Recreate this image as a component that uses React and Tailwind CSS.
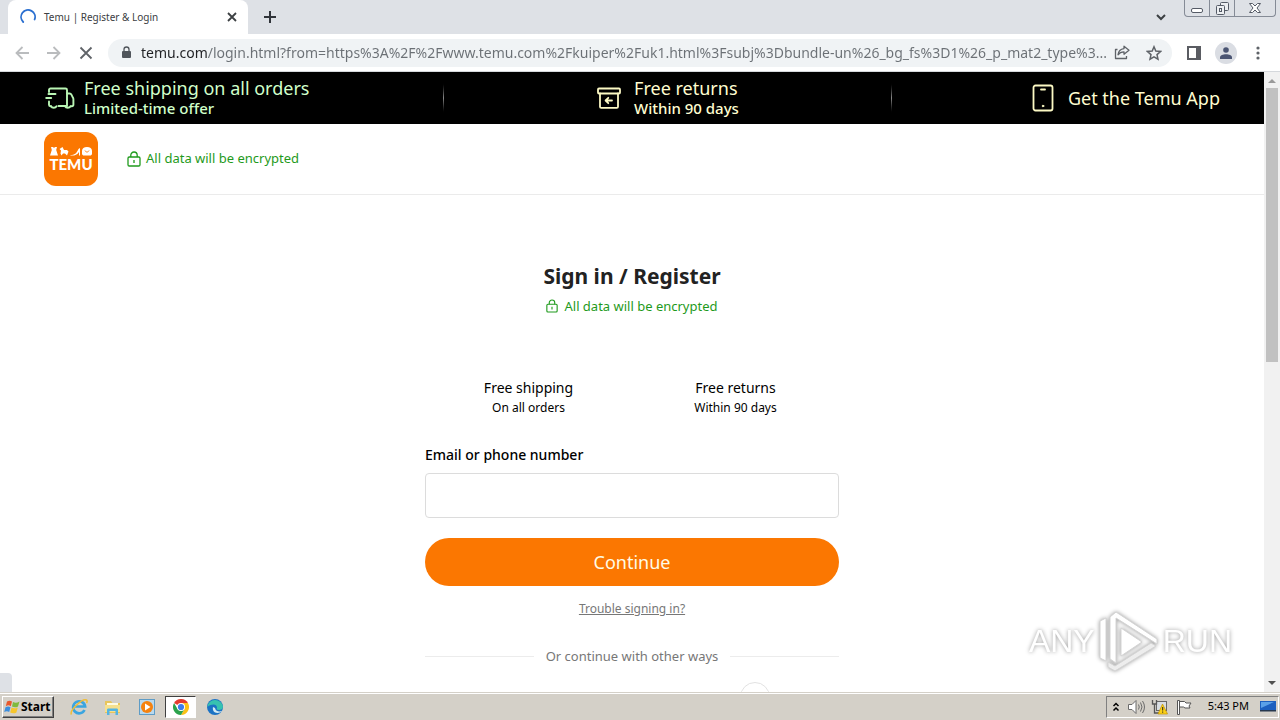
import React from "react";

const LockOutline = ({ className }) => (
  <svg viewBox="0 0 14 16" className={className} fill="none" stroke="currentColor" strokeWidth="1.3" aria-hidden="true">
    <rect x="1" y="6" width="12" height="9" rx="1.2" />
    <path d="M3.8 6V4.2a3.2 3.2 0 0 1 6.4 0V6M7 9v3" />
  </svg>
);

const Truck = () => (
  <svg viewBox="0 0 30 24" className="h-6 w-[30px] shrink-0" fill="none" stroke="#b9f5b4" strokeWidth="1.9" strokeLinecap="round" strokeLinejoin="round" aria-hidden="true">
    <path d="M4 6V4a1.500 1.500 0 0 1 1.500-1.500h15a1.500 1.500 0 0 1 1.500 1.500v16h-8.500M3.500 8h7M1.200 12h5M4 15.500v3.300a1.400 1.400 0 0 0 1.400 1.400H6" />
    <path d="M22 7.500h2.600a2 2 0 0 1 1.800 1.100l1.600 3.200c.3.500.4 1 .4 1.500v5.500a1.400 1.400 0 0 1-1.400 1.400H26" />
    <path d="M6 20.300a3 2.400 0 0 0 5.500 0M20 20.300a3 2.400 0 0 0 5.500 0" />
  </svg>
);

const ReturnBox = () => (
  <svg viewBox="0 0 26 24" className="h-6 w-[26px] shrink-0" fill="none" stroke="#fcf9c4" strokeWidth="1.8" strokeLinecap="round" strokeLinejoin="round" aria-hidden="true">
    <rect x="2" y="2.500" width="22" height="5" rx="1" />
    <path d="M4 7.500v13.200c0 .7.500 1.200 1.200 1.200h15.600c.7 0 1.200-.5 1.200-1.200V7.500M16 14.500h-6M12.300 11.800L9.600 14.500l2.700 2.700" />
  </svg>
);

const Phone = () => (
  <svg viewBox="0 0 22 28" className="h-7 w-[22px] shrink-0" fill="none" stroke="#fcf9c4" strokeWidth="1.8" strokeLinecap="round" aria-hidden="true">
    <rect x="1.500" y="1.500" width="19" height="25" rx="2" />
    <path d="M9 5.500h4" />
    <circle cx="11" cy="22" r="0.800" fill="#fcf9c4" strokeWidth="1" />
  </svg>
);

function TabStrip() {
  return (
    <header className="flex h-[34px] shrink-0 items-start bg-[#dee1e6] pl-2">
      <div className="flex h-[34px] w-60 items-center rounded-t-lg bg-white pl-3 pr-2">
        <svg viewBox="0 0 16 16" className="size-4" fill="none" stroke="#2a6fd0" strokeWidth="1.800" strokeLinecap="round" aria-hidden="true">
          <path d="M3.200 13A7 7 0 1 1 14.600 10.500" />
        </svg>
        <span className="ml-2 flex-1 text-[10px] text-[#3c4043]">Temu | Register &amp; Login</span>
        <button aria-label="Close tab" className="flex size-4 items-center justify-center">
          <svg viewBox="0 0 10 10" className="size-[10px]" stroke="#3c4043" strokeWidth="1.800" aria-hidden="true"><path d="M1 1l8 8M9 1L1 9" /></svg>
        </button>
      </div>
      <button aria-label="New tab" className="ml-3 mt-[7px] flex size-5 items-center justify-center">
        <svg viewBox="0 0 12 12" className="size-3" stroke="#30343a" strokeWidth="2" aria-hidden="true"><path d="M6 0v12M0 6h12" /></svg>
      </button>
      <div className="flex-1" />
      <button aria-label="Search tabs" className="mr-[15px] mt-[9px] flex h-4 w-4 items-center justify-center">
        <svg viewBox="0 0 10 7" className="h-[7px] w-[10px]" fill="none" stroke="#3c4043" strokeWidth="2" aria-hidden="true"><path d="M1 1l4 4 4-4" /></svg>
      </button>
      <div className="mr-1 flex h-[17px] rounded-b border border-t-0 border-[#858b96]">
        <button aria-label="Minimize" className="flex w-[25px] items-end justify-center border-r border-[#858b96] pb-[3px]">
          <svg viewBox="0 0 12 5" className="h-[5px] w-3" fill="#fff" stroke="#555b66" aria-hidden="true"><rect x=".5" y=".5" width="11" height="4" rx="1.500" /></svg>
        </button>
        <button aria-label="Restore" className="flex w-[25px] items-center justify-center border-r border-[#858b96]">
          <svg viewBox="0 0 13 13" className="size-[13px]" fill="#eceef1" stroke="#555b66" aria-hidden="true">
            <rect x="4.500" y=".5" width="8" height="8" rx="1" />
            <rect x=".5" y="3.500" width="8" height="9" rx="1" />
            <rect x="3.500" y="6.500" width="2" height="3" />
          </svg>
        </button>
        <button aria-label="Close window" className="flex w-10 items-center justify-center">
          <svg viewBox="0 0 12 10" className="h-[10px] w-3" fill="#fff" stroke="#555b66" strokeLinejoin="round" aria-hidden="true">
            <path d="M.5.500h3L6 3 8.500.500h3L8 5l3.500 4.500h-3L6 7 3.500 9.500h-3L4 5z" />
          </svg>
        </button>
      </div>
    </header>
  );
}

const address =
  "temu.com/login.html?from=https%3A%2F%2Fwww.temu.com%2Fkuiper%2Fuk1.html%3Fsubj%3Dbundle-un%26_bg_fs%3D1%26_p_mat2_type%3...";

function Toolbar() {
  return (
    <div className="flex h-[38px] shrink-0 items-center border-b border-[#d5d8dc] bg-white pl-3 pr-4">
      <button aria-label="Back" className="flex size-5 items-center justify-center">
        <svg viewBox="0 0 14 14" className="size-[14px]" fill="none" stroke="#babcbe" strokeWidth="1.800" aria-hidden="true"><path d="M14 7H1.500M7.500 1L1.500 7l6 6" /></svg>
      </button>
      <button aria-label="Forward" className="ml-3 flex size-5 items-center justify-center">
        <svg viewBox="0 0 14 14" className="size-[14px]" fill="none" stroke="#babcbe" strokeWidth="1.800" aria-hidden="true"><path d="M0 7h12.500M6.500 1l6 6-6 6" /></svg>
      </button>
      <button aria-label="Stop loading" className="ml-3 flex size-5 items-center justify-center">
        <svg viewBox="0 0 14 14" className="size-[14px]" stroke="#5f6368" strokeWidth="1.800" aria-hidden="true"><path d="M1.500 1.500l11 11M12.500 1.500l-11 11" /></svg>
      </button>
      <div className="ml-3 flex h-7 min-w-0 flex-1 items-center rounded-full bg-[#f0f3f5] pl-[13px] pr-[10px]">
        <svg viewBox="0 0 10 13" className="h-[13px] w-[10px] shrink-0" aria-hidden="true">
          <rect x="1" y="5" width="9" height="7" rx="1" fill="#50555b" />
          <path d="M3 5V3.500a2.500 2.500 0 0 1 5 0V5" fill="none" stroke="#50555b" strokeWidth="1.300" />
        </svg>
        <input
          aria-label="Address"
          defaultValue={address}
          className="ml-[10px] min-w-0 flex-1 bg-[linear-gradient(90deg,#202124_66px,#6b7075_66px)] bg-clip-text text-sm text-transparent outline-none"
        />
        <button aria-label="Share" className="ml-1">
          <svg viewBox="0 0 16 15" className="h-[15px] w-4" fill="none" stroke="#5f6368" strokeWidth="1.300" strokeLinejoin="round" aria-hidden="true">
            <path d="M3.500 4.500h-2v9h11V11" />
            <path d="M10 1.200l5 4-5 4V6.800c-2.800 0-4.600.9-6 3 .4-3.500 2.500-5.800 6-6.200z" />
          </svg>
        </button>
        <button aria-label="Bookmark" className="ml-4">
          <svg viewBox="0 0 16 16" className="size-4" fill="none" stroke="#5f6368" strokeWidth="1.500" aria-hidden="true">
            <path d="M8 1.800l1.800 4.300 4.700.4-3.500 3.100 1 4.600L8 11.800l-4 2.400 1-4.600-3.500-3.100 4.700-.4z" />
          </svg>
        </button>
      </div>
      <button aria-label="Side panel" className="ml-[15px]">
        <svg viewBox="0 0 14 14" className="size-[14px]" aria-hidden="true"><rect x="1" y="1" width="12" height="12" fill="#fff" stroke="#5a5c62" strokeWidth="2" /><path d="M9 1h4v12H9z" fill="#5a5c62" /></svg>
      </button>
      <button aria-label="Profile" className="ml-[14px] flex size-[22px] items-center justify-center rounded-full bg-[#dadde3]">
        <svg viewBox="0 0 12 12" className="size-3" fill="#4a5472" aria-hidden="true"><circle cx="6" cy="3" r="2.800" /><path d="M0 12v-1.500C0 8.500 3 7.300 6 7.300s6 1.200 6 3.200V12z" /></svg>
      </button>
      <button aria-label="Menu" className="ml-[15px] flex w-3 justify-center">
        <svg viewBox="0 0 4 14" className="h-[14px] w-1" fill="#5f6368" aria-hidden="true"><circle cx="2" cy="2" r="1.600" /><circle cx="2" cy="7" r="1.600" /><circle cx="2" cy="12" r="1.600" /></svg>
      </button>
    </div>
  );
}

const Divider = () => (
  <div className="h-8 w-px bg-linear-to-b from-black via-[#8a8a8a] to-black" />
);

function Promo() {
  return (
    <div className="grid h-[52px] grid-cols-[400fr_448fr_328fr] items-center bg-black px-[44px]">
      <div className="flex items-center justify-between text-[#d0ffca]">
        <div className="flex items-center gap-[9px] pl-px">
          <Truck />
          <div>
            <p className="text-lg leading-5">Free shipping on all orders</p>
            <p className="text-[15px] leading-5 font-medium">Limited-time offer</p>
          </div>
        </div>
        <Divider />
      </div>
      <div className="flex items-center text-[#fffdd0]">
        <div className="flex flex-1 items-center justify-center gap-3">
          <ReturnBox />
          <div>
            <p className="text-lg leading-5">Free returns</p>
            <p className="text-[15px] leading-5 font-medium">Within 90 days</p>
          </div>
        </div>
        <Divider />
      </div>
      <a href="#app" className="flex items-center justify-end gap-[14px] text-lg text-[#fffdd0]">
        <Phone />
        Get the Temu App
      </a>
    </div>
  );
}

const Logo = () => (
  <a href="#home" className="flex size-[54px] flex-col items-center justify-center rounded-xl bg-[#fb7701] text-white">
    <svg viewBox="0 0 42 9" className="h-[9px] w-[42px]" fill="#fff" aria-hidden="true">
      <path d="M1 0h2l1 1 1-1h2l-.8 3L8 8.500H0L1.800 3z" />
      <path d="M9.500 2l3-2 1.500 3h3l1.500 1.500L17 8.500l-2-2h-2l-1.500 2-1-2 .5-3z" />
      <path d="M20.500 8c4 0 6-1.500 8-6l1.500-1v7.500h-1V5c-2 3-5 4-8.500 3.500z" />
      <path d="M32 4c0-2.500 2-4 5-4s5 1.500 5 4v2.500c0 1.500-1 2-2 2h-6c-1 0-2-.5-2-2z" />
      <path d="M35 3.500c.7 2 3.300 2 4 0" fill="none" stroke="#fb7701" strokeWidth="0.900" />
    </svg>
    <span className="font-[Lato,sans-serif] text-[15px] leading-4 font-black">TEMU</span>
  </a>
);

function LoginForm() {
  return (
    <main className="mx-auto flex w-[414px] flex-col items-stretch pt-[66px]">
      <h1 className="text-center text-[21px] leading-[30px] font-bold text-[#222]">Sign in / Register</h1>
      <p className="mt-[3px] flex items-center justify-center gap-[6px] text-[13px] leading-6 text-[#1f9a1c]">
        <LockOutline className="h-[14px] w-3" />
        All data will be encrypted
      </p>
      <div className="mt-[60px] grid grid-cols-2 text-center text-black">
        <div>
          <p className="text-sm leading-5">Free shipping</p>
          <p className="text-xs leading-5">On all orders</p>
        </div>
        <div>
          <p className="text-sm leading-5">Free returns</p>
          <p className="text-xs leading-5">Within 90 days</p>
        </div>
      </div>
      <form className="mt-[27px] flex flex-col" onSubmit={(e) => e.preventDefault()}>
        <label htmlFor="account" className="text-sm leading-5 font-medium text-black">Email or phone number</label>
        <input id="account" type="text" className="mt-2 h-[45px] rounded-[4px] border border-[#dcdcdc] px-3 text-base outline-none" />
        <button type="submit" className="mt-5 h-12 rounded-full bg-[#fb7701] text-lg text-[#fffbe6]">Continue</button>
      </form>
      <a href="#help" className="mt-3 self-center text-xs leading-[22px] text-[#777] underline">Trouble signing in?</a>
      <div className="mt-[26px] flex items-center gap-3 text-[13px] leading-5 text-[#777]">
        <span className="h-px flex-1 bg-[#ececec]" />
        Or continue with other ways
        <span className="h-px flex-1 bg-[#ececec]" />
      </div>
      <div className="mt-4 flex justify-end pr-[69px]">
        <button aria-label="Other sign-in option" className="size-[30px] rounded-full border border-[#e2e2e2]" />
      </div>
    </main>
  );
}

const Watermark = () => (
  <div className="absolute right-12 bottom-5 flex items-center gap-1 font-['Liberation_Sans_Narrow','Liberation_Sans',sans-serif] text-[32px] leading-[62px] text-white drop-shadow-[0_0_2px_#999]">
    <span>ANY</span>
    <svg viewBox="0 0 60 62" className="h-[62px] w-[60px]" fill="#fff" stroke="#d4d4d4" strokeWidth="1" strokeLinejoin="round" aria-hidden="true">
      <path d="M1 11l6-3v43l-6-3z" />
      <path d="M11 7l6-5 41 27v5L17 8v45l-6-4z" />
      <path d="M22 18l21 14-21 14z" />
      <path d="M57 36L16 61l-7-4v-5l7 4 36-23z" fill="#ededed" />
    </svg>
    <span>RUN</span>
  </div>
);

function Scrollbar() {
  return (
    <div className="flex w-4 shrink-0 flex-col items-center bg-[#f1f1f1]" aria-hidden="true">
      <svg viewBox="0 0 16 16" className="size-4 shrink-0" fill="#9a9a9a"><path d="M4 11l4-4 4 4z" /></svg>
      <div className="h-[274px] w-3 shrink-0 bg-[#c1c1c1]" />
      <div className="flex-1" />
      <svg viewBox="0 0 16 16" className="size-4 shrink-0" fill="#505050"><path d="M4 5l4 4 4-4z" /></svg>
    </div>
  );
}

function Taskbar() {
  return (
    <footer className="flex h-7 shrink-0 items-center border-t border-[#d4d0c8] bg-[#d4d0c8] shadow-[inset_0_1px_0_#fff]">
      <button className="ml-[2px] flex h-[22px] w-[52px] items-center gap-px border border-t-white border-l-white border-r-[#404040] border-b-[#404040] pl-px text-xs font-bold text-black shadow-[inset_-1px_-1px_0_#808080]">
        <svg viewBox="0 0 16 14" className="h-[14px] w-4 shrink-0" aria-hidden="true">
          <path d="M3 1.500c2-1.300 3.500-1 5 0L6.800 6.200c-1.500-1-3-1.200-5 0z" fill="#e8582c" />
          <path d="M9 2c2 1 4 1 6.500-.5L14 6.500c-2 1.200-4 1-6 0z" fill="#7fba3c" />
          <path d="M1.500 7.300c2-1.200 3.500-1 5 0L5.200 12c-1.500-1-3-1.200-5 0z" fill="#3b8ede" />
          <path d="M7.600 7.600c2 1 4 1 6.200-.1l-1.400 5c-2 1.200-4 1-6.200 0z" fill="#f6c62c" />
        </svg>
        Start
      </button>
      <button aria-label="Internet Explorer" className="ml-4">
        <svg viewBox="0 0 18 18" className="size-[18px]" fill="none" aria-hidden="true">
          <path d="M14.500 12a6 6 0 1 1 .6-3.500H5" stroke="#3aa5e0" strokeWidth="2.700" />
          <path d="M1.500 16.500C-1 13 12 0 16.500 2c1 .6.600 2 0 3" stroke="#f0bd35" strokeWidth="1.500" />
        </svg>
      </button>
      <button aria-label="File Explorer" className="ml-4">
        <svg viewBox="0 0 18 18" className="size-[18px]" aria-hidden="true">
          <path d="M1 3h6l1.500 2H16v10H1z" fill="#e8c55b" /><path d="M3 5h11v6H3z" fill="#fffbe2" /><path d="M1 7h15v7H1z" fill="#f6e08e" />
          <path d="M3 17v-5c0-1 .5-1.500 1.500-1.500h8c1 0 1.500.5 1.500 1.500v5h-2.500v-4h-6v4z" fill="#54b4e2" />
        </svg>
      </button>
      <button aria-label="Media Player" className="ml-[17px]">
        <svg viewBox="0 0 16 16" className="size-4" aria-hidden="true">
          <rect x=".5" y=".5" width="15" height="15" fill="#b9d9ee" stroke="#5e9cc6" /><circle cx="8" cy="8" r="6" fill="#f5820f" /><path d="M6 4.500l5.500 3.500L6 11.500z" fill="#fff" />
        </svg>
      </button>
      <button aria-label="Chrome" className="ml-[10px] flex h-[22px] w-[31px] items-center justify-center border border-t-[#404040] border-l-[#404040] border-r-white border-b-white bg-white">
        <svg viewBox="0 0 16 16" className="size-4" aria-hidden="true">
          <path d="M8 8L1.070 4A8 8 0 0 1 14.930 4z" fill="#e33b2e" /><path d="M8 8V4h6.930A8 8 0 0 1 8 16l3.460-6z" fill="#fbc116" />
          <path d="M8 8l3.460 2L8 16A8 8 0 0 1 1.070 4L4.540 10z" fill="#2ba24c" /><circle cx="8" cy="8" r="4" fill="#fff" /><circle cx="8" cy="8" r="3.100" fill="#3b7ded" />
        </svg>
      </button>
      <button aria-label="Edge" className="ml-[11px]">
        <svg viewBox="0 0 16 16" className="size-4" aria-hidden="true">
          <circle cx="8" cy="8" r="8" fill="#1b72c4" /><path d="M.2 8A8 8 0 0 1 16 7.500c0 2.500-2 3.500-4 3.500s-3-.7-2-2C10.500 6 6 3.500.2 8z" fill="#37c2b0" />
          <path d="M6 8c-1 4 2 7 7 5.500 1-.4 1.500-.8 2-1.500-2.500 1-6.500.5-7-3z" fill="#d4ebf4" />
        </svg>
      </button>
      <div className="flex-1" />
      <div className="mr-[1px] flex h-[22px] items-center border border-t-[#808080] border-l-[#808080] border-r-white border-b-white pl-[5px] pr-[2px]">
        <button aria-label="Show hidden icons">
          <svg viewBox="0 0 8 10" className="h-[10px] w-2" fill="none" stroke="#000" strokeWidth="1.500" aria-hidden="true"><path d="M1.500 4L4 1.500 6.500 4M1.500 8.500L4 6l2.500 2.500" /></svg>
        </button>
        <svg viewBox="0 0 17 14" className="ml-2 h-[14px] w-[17px]" fill="#fff" stroke="#6b6b6b" aria-hidden="true">
          <path d="M.5 4.500H4l4-4v13l-4-4H.5z" /><path d="M10.500 4.500q1.500 2.500 0 5M12.500 2.500q3 4.500 0 9M14.500 1q4 6 0 12" fill="none" />
        </svg>
        <svg viewBox="0 0 17 16" className="ml-[6px] h-4 w-[17px]" aria-hidden="true">
          <rect x="5.500" y="2.500" width="10" height="9" fill="#d8dde2" stroke="#666" /><path d="M1.500 1v4h4V1M3.500 5v9h6" fill="none" stroke="#555" strokeWidth="1.300" />
          <path d="M11.500 5l5 10H7z" fill="#fcd116" stroke="#c29200" strokeWidth=".7" /><path d="M11.700 8v3.500M11.700 12.500v1.200" stroke="#222" />
        </svg>
        <svg viewBox="0 0 16 16" className="ml-2 size-4" fill="#fff" stroke="#555" aria-hidden="true"><path d="M1.500 15.500V1.500h2v14zM3.500 2.500h5l1.500 1.500h5l-2 3 1 2h-5L7.500 8h-4z" /></svg>
        <time className="ml-4 text-[11px] text-black">5:43 PM</time>
        <svg viewBox="0 0 16 13" className="ml-[11px] h-[13px] w-4" aria-hidden="true"><path d="M0 1h16v9H0z" fill="#1c5fbf" /><path d="M1 2h13L1 8z" fill="#5aa0e8" /><path d="M0 10h16v1.500H0z" fill="#26384e" /></svg>
      </div>
    </footer>
  );
}

export default function App() {
  return (
    <div className="flex h-screen flex-col overflow-hidden bg-white font-['Noto_Sans',sans-serif]">
      <TabStrip />
      <Toolbar />
      <div className="relative flex min-h-0 flex-1">
        <div className="min-w-0 flex-1 overflow-hidden">
          <Promo />
          <div className="flex h-[71px] items-center gap-[29px] border-b border-[#ebebeb] px-[44px]">
            <Logo />
            <p className="flex items-center gap-[5px] text-[13px] text-[#1f9a1c]">
              <LockOutline className="h-4 w-[14px]" />
              All data will be encrypted
            </p>
          </div>
          <LoginForm />
        </div>
        <Scrollbar />
        <Watermark />
        <div className="absolute bottom-0 left-0 h-[19px] w-3 rounded-tr bg-[#dee1e6]" />
      </div>
      <Taskbar />
    </div>
  );
}
